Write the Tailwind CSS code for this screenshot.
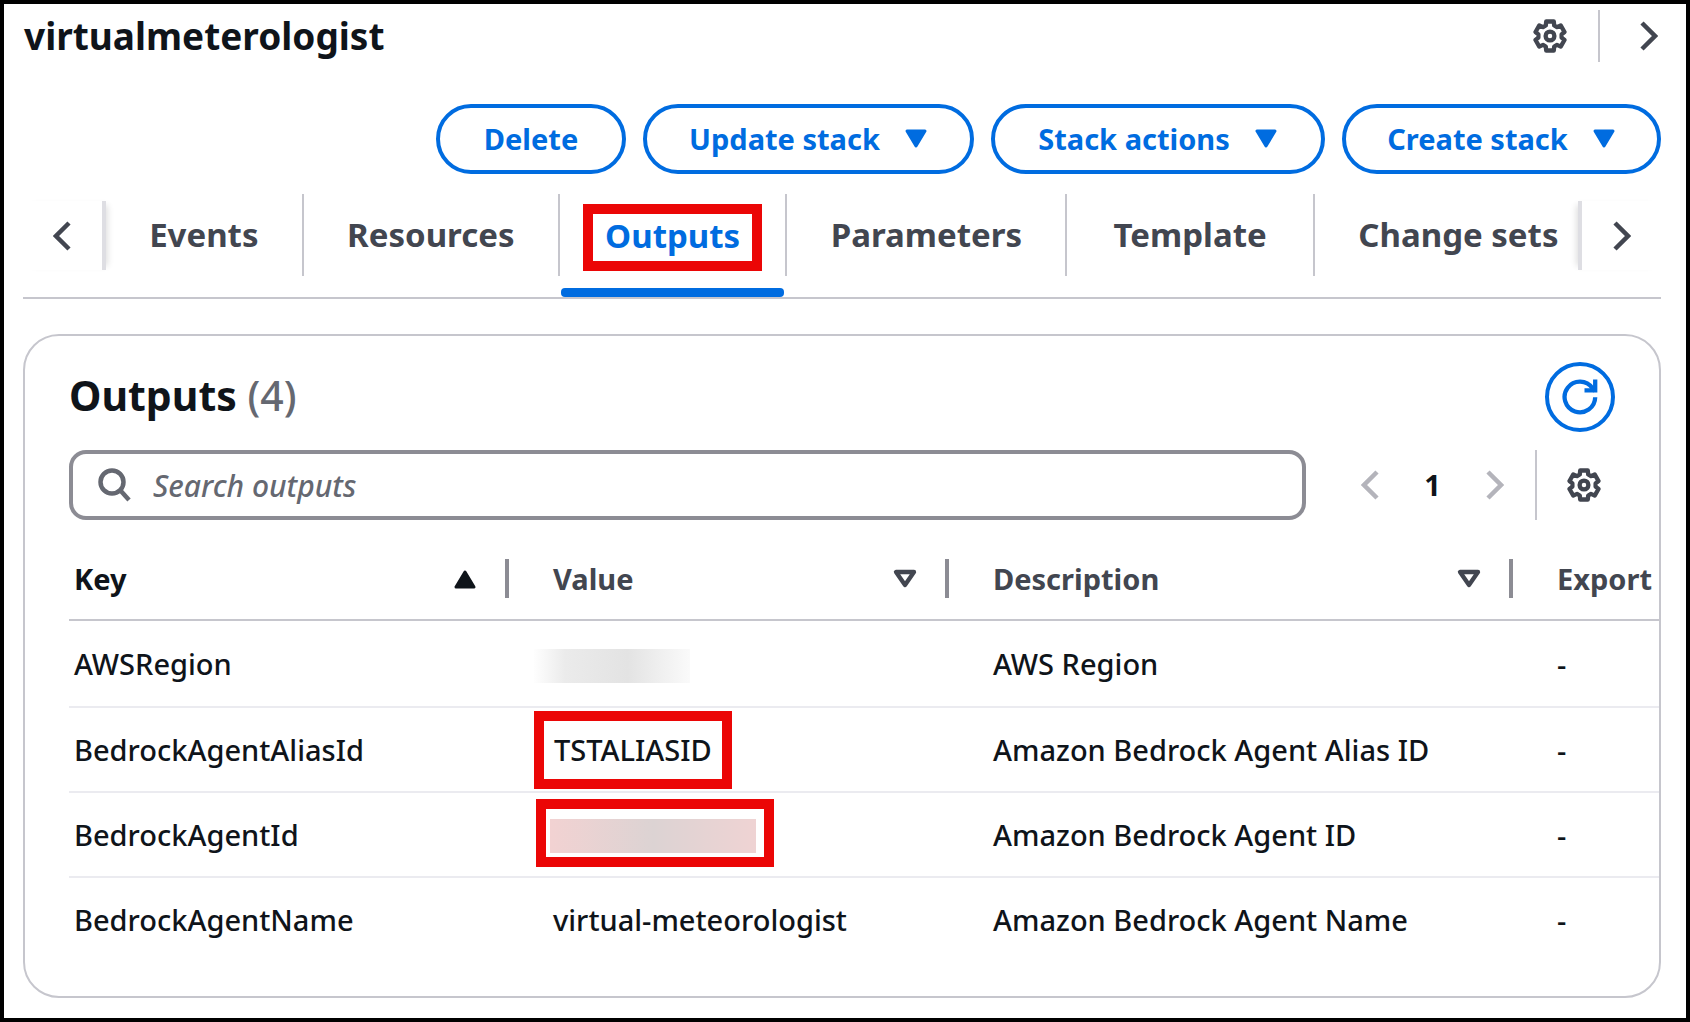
<!DOCTYPE html>
<html lang="en">
<head>
    <meta charset="UTF-8">
    <meta name="viewport" content="width=device-width, initial-scale=1.0">
    <title>virtualmeterologist - Outputs</title>
    <script src="https://cdn.jsdelivr.net/npm/@tailwindcss/browser@4"></script>
</head>
<body class="min-h-screen border-4 border-black bg-white pt-1.5 pr-6 pb-3 pl-5 font-['Noto_Sans',sans-serif] text-[29px] text-[#0f141a]">
    <!-- Shared icons -->
    <svg class="hidden">
        <symbol id="gear" viewBox="0 0 34 34">
            <path d="M13.2 2.5H20.8L21.2 6.5L24 8.1L27.7 6.4L31.5 13L28.6 15.4V18.6L31.5 21L27.7 27.6L24 25.9L21.2 27.5L20.8 31.5H13.2L12.8 27.5L10 25.9L6.3 27.6L2.5 21L5.4 18.6V15.4L2.5 13L6.3 6.4L10 8.1L12.8 6.5Z" fill="none" stroke="currentColor" stroke-width="4.3" stroke-linejoin="round"/>
            <circle cx="17" cy="17" r="4.4" fill="none" stroke="currentColor" stroke-width="4.3"/>
        </symbol>
        <symbol id="left" viewBox="0 0 18 30">
            <path d="M16 2L3 15L16 28" fill="none" stroke="currentColor" stroke-width="4.5"/>
        </symbol>
        <symbol id="right" viewBox="0 0 18 30">
            <path d="M2 2L15 15L2 28" fill="none" stroke="currentColor" stroke-width="4.5"/>
        </symbol>
        <symbol id="caret" viewBox="0 0 24 20">
            <path d="M3 2H21L12 17Z" fill="currentColor" stroke="currentColor" stroke-width="3" stroke-linejoin="round"/>
        </symbol>
        <symbol id="caret-open" viewBox="0 0 24 20">
            <path d="M3 3H21L12 16Z" fill="none" stroke="currentColor" stroke-width="4.3" stroke-linejoin="round"/>
        </symbol>
    </svg>

    <header class="flex h-[52px] items-center text-[#424650]">
        <h1 class="grow text-[37px] leading-[52px] font-bold text-[#0f141a]">virtualmeterologist</h1>
        <button aria-label="Preferences" class="mr-[31px]"><svg class="size-[34px]"><use href="#gear"/></svg></button>
        <div class="h-[52px] w-[2px] bg-[#c6c6cd]"></div>
        <button aria-label="Next panel" class="mr-1 ml-10"><svg class="h-[30px] w-[18px]"><use href="#right"/></svg></button>
    </header>

    <div class="mt-[42px] mr-px flex justify-end gap-[17px] font-bold text-[#006ce0]">
        <button class="flex h-[70px] w-[190px] items-center justify-center rounded-full border-4 border-[#006ce0]">Delete</button>
        <button class="flex h-[70px] w-[331px] items-center justify-center gap-6 rounded-full border-4 border-[#006ce0]">Update stack<svg class="h-5 w-6"><use href="#caret"/></svg></button>
        <button class="flex h-[70px] w-[334px] items-center justify-center gap-6 rounded-full border-4 border-[#006ce0]">Stack actions<svg class="h-5 w-6"><use href="#caret"/></svg></button>
        <button class="flex h-[70px] w-[319px] items-center justify-center gap-6 rounded-full border-4 border-[#006ce0]">Create stack<svg class="h-5 w-6"><use href="#caret"/></svg></button>
    </div>

    <nav class="mt-5 -ml-px mr-px flex h-[105px] border-b-2 border-[#c6c6cd] text-[33px] font-bold whitespace-nowrap text-[#424650]">
        <button aria-label="Scroll left" class="mt-[7px] flex h-[69px] w-[83px] items-center justify-center border-r-4 border-[#dedee3] pr-0.5 shadow-[6px_0_6px_-4px_rgba(0,0,0,0.12)]"><svg class="h-[30px] w-[18px]"><use href="#left"/></svg></button>
        <div class="flex grow text-center leading-[82px]">
            <a href="#" class="h-[82px] flex-[197_1_0%] border-r-2 border-[#c6c6cd]">Events</a>
            <a href="#" class="h-[82px] flex-[256_1_0%] border-r-2 border-[#c6c6cd]">Resources</a>
            <a href="#" aria-current="page" class="relative flex h-[82px] flex-[227_1_0%] items-center justify-center border-r-2 border-[#c6c6cd] text-[#006ce0]">
                <span class="mt-1 border-10 border-[#eb0606] px-3 pb-1 leading-[43px]">Outputs</span>
                <span class="absolute inset-x-px -bottom-[21px] h-[9px] rounded bg-[#006ce0]"></span>
            </a>
            <a href="#" class="h-[82px] flex-[280_1_0%] border-r-2 border-[#c6c6cd]">Parameters</a>
            <a href="#" class="h-[82px] flex-[247_1_0%] border-r-2 border-[#c6c6cd]">Template</a>
            <a href="#" class="h-[82px] flex-[265_1_0%]"><span class="pl-6">Change sets</span></a>
        </div>
        <button aria-label="Scroll right" class="mt-[7px] flex h-[69px] w-[83px] items-center justify-center border-l-4 border-[#dedee3] shadow-[-6px_0_6px_-4px_rgba(0,0,0,0.12)]"><svg class="h-[30px] w-[18px]"><use href="#right"/></svg></button>
    </nav>

    <main class="mt-[35px] mr-px -ml-px overflow-hidden rounded-[36px] border-2 border-[#c6c6cd] pt-[26px] pb-[35px] pl-11">
        <div class="mr-11 flex h-[70px] items-center justify-between">
            <h2 class="pb-0.5 text-[41px] font-bold">Outputs <span class="font-medium text-[#656871]">(4)</span></h2>
            <button aria-label="Refresh" class="flex size-[70px] items-center justify-center rounded-full border-4 border-[#006ce0] text-[#006ce0]">
                <svg class="size-[36px]" viewBox="0 0 36 36" fill="none" stroke="currentColor" stroke-width="4.300">
                    <path d="M33.200 18.200A15.300 15.300 0 1 1 30.500 9.300L33 12"/>
                    <path d="M33.200 .5V11.300H22.500"/>
                </svg>
            </button>
        </div>

        <div class="mt-[18px] mr-[58px] flex h-[70px] items-center text-[#b4b4bb]">
            <label class="flex h-[70px] grow items-center rounded-[17px] border-4 border-[#8c8c94] pl-[25px] text-[#656871]">
                <svg class="h-[34px] w-[33px]" viewBox="0 0 33 34" fill="none" stroke="currentColor" stroke-width="4.500">
                    <circle cx="14" cy="14" r="11.500"/>
                    <path d="M22 22L31 32"/>
                </svg>
                <input type="text" aria-label="Search outputs" placeholder="Search outputs" class="ml-[22px] grow text-[30px] font-medium outline-none placeholder:text-[#656871] placeholder:italic">
            </label>
            <button aria-label="Previous page" class="ml-[55px]"><svg class="h-[30px] w-[18px]"><use href="#left"/></svg></button>
            <span class="w-[107px] text-center font-bold text-[#0f141a]">1</span>
            <button aria-label="Next page"><svg class="h-[30px] w-[18px]"><use href="#right"/></svg></button>
            <div class="mr-[30px] ml-[31px] h-[70px] w-[2px] bg-[#c6c6cd]"></div>
            <button aria-label="Settings" class="text-[#424650]"><svg class="size-[34px]"><use href="#gear"/></svg></button>
        </div>

        <table class="mt-[18px] w-full table-fixed text-left whitespace-nowrap">
            <colgroup>
                <col class="w-[440px]">
                <col class="w-[440px]">
                <col class="w-[564px]">
                <col>
            </colgroup>
            <thead class="text-[#424650]">
                <tr class="h-[82px] border-b-2 border-[#c6c6cd]">
                    <th class="pl-[5px] text-[#0f141a]">
                        <div class="flex h-[39px] items-center justify-between border-r-4 border-[#8c8c94] pr-7">Key<svg class="h-5 w-6 rotate-180"><use href="#caret"/></svg></div>
                    </th>
                    <th class="pl-11">
                        <div class="flex h-[39px] items-center justify-between border-r-4 border-[#8c8c94] pr-7">Value<svg class="h-5 w-6"><use href="#caret-open"/></svg></div>
                    </th>
                    <th class="pl-11">
                        <div class="flex h-[39px] items-center justify-between border-r-4 border-[#8c8c94] pr-7">Description<svg class="h-5 w-6"><use href="#caret-open"/></svg></div>
                    </th>
                    <th class="pl-11">Export</th>
                </tr>
            </thead>
            <tbody class="font-medium">
                <tr class="h-[87px] border-b-2 border-[#ebebf0]">
                    <td class="pl-[5px]">AWSRegion</td>
                    <td class="pt-1 pl-[25px]">
                        <div class="h-[34px] w-[156px] bg-[linear-gradient(90deg,#fefefe,#ebebeb_20%,#e3e3e3_60%,#f0f0f0_82%,#fafafa)]"></div>
                    </td>
                    <td class="pl-11">AWS Region</td>
                    <td class="pl-11">-</td>
                </tr>
                <tr class="h-[85px] border-b-2 border-[#ebebf0]">
                    <td class="pl-[5px]">BedrockAgentAliasId</td>
                    <td class="pl-[25px]"><div class="w-fit border-10 border-[#eb0606] px-[10px] leading-[58px]">TSTALIASID</div></td>
                    <td class="pl-11">Amazon Bedrock Agent Alias ID</td>
                    <td class="pl-11">-</td>
                </tr>
                <tr class="h-[85px] border-b-2 border-[#ebebf0]">
                    <td class="pl-[5px]">BedrockAgentId</td>
                    <td class="pb-1 pl-[27px]">
                        <div class="w-fit border-10 border-[#eb0606] pt-[10px] pr-2 pb-1 pl-1">
                            <div class="h-[34px] w-[206px] bg-linear-to-r from-[#f2d2d2] via-[#dcd3d3] to-[#efd3d3]"></div>
                        </div>
                    </td>
                    <td class="pl-11">Amazon Bedrock Agent ID</td>
                    <td class="pl-11">-</td>
                </tr>
                <tr class="h-[84px]">
                    <td class="pl-[5px]">BedrockAgentName</td>
                    <td class="pl-11">virtual-meteorologist</td>
                    <td class="pl-11">Amazon Bedrock Agent Name</td>
                    <td class="pl-11">-</td>
                </tr>
            </tbody>
        </table>
    </main>
</body>
</html>
